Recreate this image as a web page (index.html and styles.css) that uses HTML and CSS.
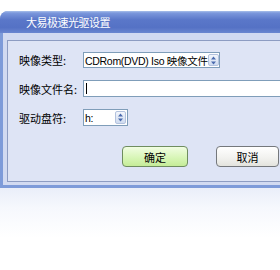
FILE: index.html
```html
<!DOCTYPE html>
<html>
<head>
<meta charset="utf-8">
<link rel="stylesheet" href="styles.css">
</head>
<body>
<div class="window">
  <div class="titlebar">大易极速光驱设置</div>
  <div class="frame">
    <div class="panel">
      <div class="form">
        <div class="label">映像类型:</div>
        <div class="select wide">
          <span class="value">CDRom(DVD) Iso 映像文件</span>
          <span class="spin"><svg width="7" height="9" viewBox="0 0 7 9"><path d="M3.5 0.5 L6 3.5 H1 Z M3.5 8.5 L6 5.5 H1 Z" fill="#4a6aae"/></svg></span>
        </div>
        <div class="label">映像文件名:</div>
        <div class="input"><span class="caret"></span></div>
        <div class="label">驱动盘符:</div>
        <div class="select narrow">
          <span class="value">h:</span>
          <span class="spin"><svg width="7" height="9" viewBox="0 0 7 9"><path d="M3.5 0.5 L6 3.5 H1 Z M3.5 8.5 L6 5.5 H1 Z" fill="#4a6aae"/></svg></span>
        </div>
      </div>
      <div class="buttons">
        <button class="btn ok">确定</button>
        <button class="btn cancel">取消</button>
      </div>
    </div>
  </div>
</div>
<div class="reflection"></div>
</body>
</html>
```
FILE: styles.css
```css
html, body {
  margin: 0;
  padding: 0;
  background: #ffffff;
  overflow: hidden;
  width: 280px;
  height: 270px;
  font-family: "Liberation Sans", "Noto Sans CJK SC", sans-serif;
}
.window {
  margin-top: 11px;
  width: 280px;
  background: #7e9bd9;
  border-radius: 8px 0 0 0;
  padding-left: 3px;
  padding-bottom: 3px;
  box-sizing: border-box;
}
.titlebar {
  height: 22px;
  line-height: 22px;
  margin-left: -3px;
  padding-left: 26px;
  color: #ffffff;
  font-family: "Noto Sans CJK SC", sans-serif;
  font-size: 11px;
  letter-spacing: -0.5px;
  border-radius: 8px 0 0 0;
  background: linear-gradient(#a9c0ea 0, #7b97dc 2px, #5a77c9 40%, #5572c5 75%, #6a86d0 100%);
}
.frame {
  background: #d2daf1;
  padding: 7px 0 3px 4px;
}
.panel {
  border: 1px solid #8d9cc2;
  border-right: none;
  background: #dee4f5;
  height: 142px;
  box-sizing: border-box;
  padding: 11px 0 0 11px;
  overflow: hidden;
}
.form {
  display: grid;
  grid-template-columns: 64px 1fr;
  grid-template-rows: 16px 17px 17px;
  row-gap: 12px;
  align-items: center;
}
.label {
  font-family: "Noto Sans CJK SC", sans-serif;
  font-size: 11px;
  color: #000;
  line-height: 16px;
}
.select, .input {
  height: 100%;
  box-sizing: border-box;
  border: 1px solid #7f9db9;
  background: #ffffff;
  display: flex;
  align-items: center;
}
.select.wide { width: 137px; }
.select.narrow { width: 45px; }
.input { width: 200px; }
.form > .input { align-self: stretch; border-right: none; }
.value {
  flex: 1;
  padding-left: 1px;
  font-size: 10.5px;
  letter-spacing: -0.3px;
  color: #000;
  white-space: nowrap;
  font-family: "Liberation Sans", "Noto Sans CJK SC", sans-serif;
}
.spin {
  width: 11px;
  height: calc(100% - 2px);
  margin-right: 1px;
  border: 1px solid #b3c2de;
  border-radius: 2px;
  background: linear-gradient(#f3f6fc, #cfdbef);
  box-sizing: border-box;
  display: flex;
  align-items: center;
  justify-content: center;
  flex: none;
}
.caret {
  display: block;
  width: 1px;
  height: 11px;
  margin-left: 2px;
  background: #000;
}
.buttons {
  display: flex;
  gap: 28px;
  margin-top: 20px;
  padding-left: 103px;
}
.btn {
  height: 21px;
  box-sizing: border-box;
  border-radius: 4px;
  font-family: "Noto Sans CJK SC", sans-serif;
  font-size: 11px;
  color: #000;
  padding: 0;
  flex: none;
}
.btn.ok {
  width: 66px;
  border: 1px solid #6f8d5f;
  background: linear-gradient(#f1fde2, #d6f5b4 60%, #c5ec98);
}
.btn.cancel {
  width: 63px;
  border: 1px solid #75787c;
  background: linear-gradient(#ffffff, #f1f1ee 60%, #e3e3dd);
}
.reflection {
  height: 50px;
  width: 280px;
  background: linear-gradient(#eaeef9, #f6f8fd 40%, #ffffff);
}
```
